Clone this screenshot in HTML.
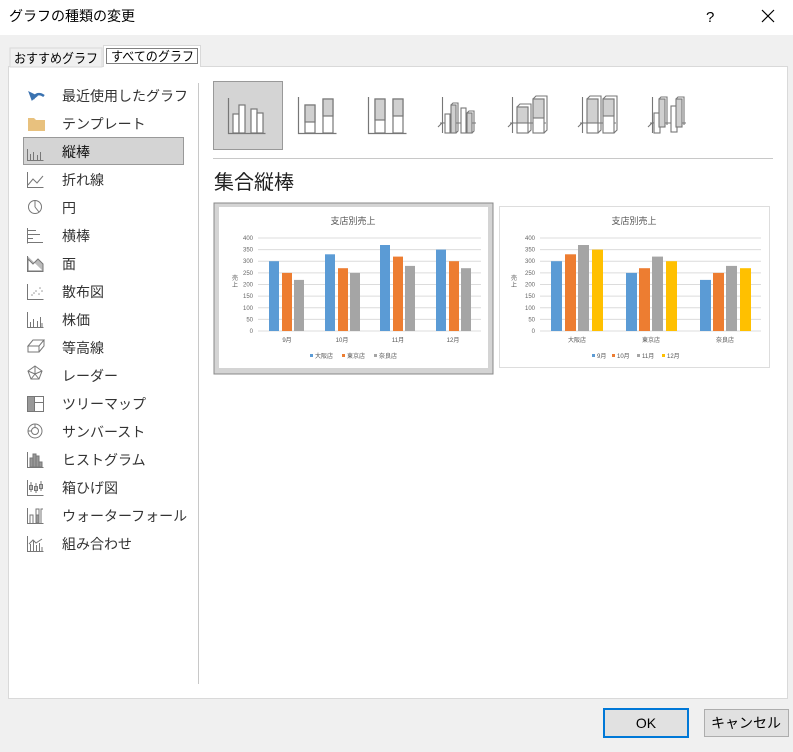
<!DOCTYPE html>
<html><head><meta charset="utf-8"><style>
body{margin:0;width:793px;height:747px;overflow:hidden;background:#f0f0f0;font-family:"Liberation Sans","Noto Sans CJK JP",sans-serif}
svg text{font-family:"Liberation Sans","Noto Sans CJK JP",sans-serif}
</style></head><body>
<svg width="793" height="747" xmlns="http://www.w3.org/2000/svg">
<rect x="0" y="0" width="793" height="35" fill="#fff"/>
<text x="9" y="21" font-size="14" fill="#000">グラフの種類の変更</text>
<text x="706" y="22" font-size="15" fill="#000">?</text>
<path d="M762 10 L774 22 M774 10 L762 22" stroke="#000" stroke-width="1.2"/>
<rect x="8.5" y="66.5" width="779" height="632" fill="#fff" stroke="#d9d9d9"/>
<rect x="10" y="48" width="92" height="19" fill="#f0f0f0" stroke="#d9d9d9"/>
<text x="14" y="63" font-size="13" textLength="84" lengthAdjust="spacingAndGlyphs">おすすめグラフ</text>
<rect x="103.5" y="45.5" width="97" height="21" fill="#fff" stroke="#d9d9d9"/>
<rect x="106.5" y="48.5" width="91" height="15" fill="none" stroke="#000" stroke-dasharray="1,1"/>
<text x="111" y="61" font-size="13" textLength="83" lengthAdjust="spacingAndGlyphs">すべてのグラフ</text>
<rect x="104" y="66" width="96" height="2" fill="#fff"/>
<line x1="198.5" y1="83" x2="198.5" y2="684" stroke="#c8c8c8"/>
<rect x="23.5" y="137.5" width="160" height="27" fill="#d4d4d4" stroke="#999"/>
<g font-size="14" fill="#333">
<text x="62" y="101">最近使用したグラフ</text>
<text x="62" y="129">テンプレート</text>
<text x="62" y="157" fill="#111">縦棒</text>
<text x="62" y="185">折れ線</text>
<text x="62" y="213">円</text>
<text x="62" y="241">横棒</text>
<text x="62" y="269">面</text>
<text x="62" y="297">散布図</text>
<text x="62" y="325">株価</text>
<text x="62" y="353">等高線</text>
<text x="62" y="381">レーダー</text>
<text x="62" y="409">ツリーマップ</text>
<text x="62" y="437">サンバースト</text>
<text x="62" y="465">ヒストグラム</text>
<text x="62" y="493">箱ひげ図</text>
<text x="62" y="521">ウォーターフォール</text>
<text x="62" y="549">組み合わせ</text>
</g>
<g fill="none" stroke="#777" stroke-width="1">
<path d="M33 99 Q37 91 44 96" stroke="#3a72b0" stroke-width="2.5"/><path d="M29 92 L32 100 L37 96Z" fill="#3a72b0" stroke="#3a72b0"/>
<path d="M28 118 h6 l2 2 h9 v11 h-17z" fill="#e8c17e" stroke="none"/>
<path d="M27.5 149 v11.5 h16 M30.5 160 v-6 M33.5 160 v-8 M37.5 160 v-5 M40.5 160 v-8"/>
<path d="M27.5 172 v15.5 h16 M28 185 l5 -6 l4 4 l6 -7"/>
<circle cx="35" cy="207" r="6.5"/><path d="M35 207 V200.5 M35 207 L39 212"/>
<path d="M27.5 228 v15.5 M28 230.5h8 M28 234.5h12 M28 238.5h5 M28 242.5h15"/>
<path d="M27.5 256 v15.5 h16 M28 259 l5 5 l5 -5 l5 5 v7 h-15z" fill="#bbb"/>
<path d="M27.5 284 v15.5 h16" /><g fill="#999" stroke="none"><circle cx="32" cy="295" r=".8"/><circle cx="36" cy="291" r=".8"/><circle cx="40" cy="288" r=".8"/><circle cx="34" cy="293" r=".8"/><circle cx="39" cy="294" r=".8"/><circle cx="42" cy="291" r=".8"/></g>
<path d="M27.5 312 v15.5 h16 M30.5 327 v-5 M33.5 327 v-8 M37.5 327 v-6 M40.5 327 v-10 M42 327 v-4"/>
<path d="M28 346 l5 -6 h11 l-5 6z M28 346 v6 h11 v-6 M39 352 l5 -6 v-6"/>
<path d="M35 366 l7 5 l-3 8 h-8 l-3 -8z M35 366 v8 l7 -3 M35 374 l4 5 M35 374 l-4 5 M35 374 l-7 -3"/>
<rect x="27.5" y="396.5" width="16" height="15"/><rect x="28" y="397" width="6" height="14" fill="#999" stroke="none"/><path d="M34.5 397 v14 M34.5 402.5 h9"/>
<circle cx="35" cy="431" r="7"/><circle cx="35" cy="431" r="3.5"/><path d="M35 424 L35 427.5 M28 431 h3.5"/>
<path d="M27.5 452 v15.5 h16" /><rect x="30" y="458" width="3" height="9" fill="#999"/><rect x="33" y="454" width="3" height="13" fill="#999"/><rect x="36" y="456" width="3" height="11" fill="#999"/><rect x="39" y="462" width="3" height="5" fill="#999"/>
<path d="M27.5 480 v15.5 h16 M31 482 v10 M36 483 v10 M41 481 v10"/><rect x="29.5" y="485.5" width="3" height="4"/><rect x="34.5" y="486.5" width="3" height="4"/><rect x="39.5" y="484.5" width="3" height="4"/>
<path d="M27.5 508 v15.5 h16 M30 523 v-8 h3 v8 M36 515 v-6 h3 v14 M41 523 v-14 h2"/><rect x="36" y="515" width="3" height="8" fill="#999"/>
<path d="M27.5 536 v15.5 h16 M30.5 551 v-7 M33.5 551 v-10 M36.5 551 v-6 M39.5 551 v-8 M42 551 v-4 M29 544 l4 -4 l3 3 l6 -4"/>
</g>
<rect x="213.5" y="81.5" width="69" height="68" fill="#d4d4d4" stroke="#999"/>
<g fill="none" stroke="#777" stroke-width="1.2">
<path d="M228.5 98 v35.5 h37"/>
<rect x="233" y="114" width="6" height="19" fill="#fff"/><rect x="239" y="105" width="6" height="28" fill="#fff"/><rect x="251" y="109" width="6" height="24" fill="#fff"/><rect x="257" y="113" width="6" height="20" fill="#fff"/>
<path d="M298.5 97 v36.5 h38"/>
<rect x="305" y="105" width="10" height="28" fill="#fff"/><rect x="305" y="105" width="10" height="17" fill="#d0d0d0"/>
<rect x="323" y="99" width="10" height="34" fill="#fff"/><rect x="323" y="99" width="10" height="17" fill="#d0d0d0"/>
<path d="M368.5 97 v36.5 h38"/>
<rect x="375" y="99" width="10" height="34" fill="#fff"/><rect x="375" y="99" width="10" height="21" fill="#d0d0d0"/>
<rect x="393" y="99" width="10" height="34" fill="#fff"/><rect x="393" y="99" width="10" height="17" fill="#d0d0d0"/>
</g>
<g fill="none" stroke="#777" stroke-width="1.1">
<path d="M442.5 97 v36 M438 127 l5 -5 M440 123 h36"/>
<rect x="445" y="114" width="5" height="19" fill="#fff"/><rect x="451" y="105" width="5" height="28" fill="#d0d0d0"/><rect x="461" y="108" width="5" height="25" fill="#fff"/><rect x="467" y="113" width="5" height="20" fill="#d0d0d0"/>
<path d="M451 105 l2 -2 h5 v28 l-2 2 M467 113 l2 -2 h5 v20 l-2 2"/>
<path d="M512.5 97 v36 M508 127 l5 -5 M510 123 h36"/>
<rect x="517" y="107" width="11" height="26" fill="#fff"/><rect x="517" y="107" width="11" height="16" fill="#d0d0d0"/>
<rect x="533" y="99" width="11" height="34" fill="#fff"/><rect x="533" y="99" width="11" height="19" fill="#d0d0d0"/>
<path d="M517 107 l3 -3 h11 v26 l-3 3 M533 99 l3 -3 h11 v34 l-3 3"/>
<path d="M582.5 97 v36 M578 127 l5 -5 M580 123 h36"/>
<rect x="587" y="99" width="11" height="34" fill="#fff"/><rect x="587" y="99" width="11" height="24" fill="#d0d0d0"/>
<rect x="603" y="99" width="11" height="34" fill="#fff"/><rect x="603" y="99" width="11" height="17" fill="#d0d0d0"/>
<path d="M587 99 l3 -3 h11 v34 l-3 3 M603 99 l3 -3 h11 v34 l-3 3"/>
<path d="M652.5 97 v36 M648 127 l5 -5 M650 123 h36"/>
<rect x="654" y="113" width="6" height="20" fill="#fff"/><rect x="659" y="99" width="6" height="28" fill="#d0d0d0"/><rect x="671" y="106" width="6" height="26" fill="#fff"/><rect x="676" y="99" width="6" height="28" fill="#d0d0d0"/>
<path d="M659 99 l2 -2 h6 v28 M676 99 l2 -2 h6 v28"/>
</g>
<line x1="213" y1="158.5" x2="773" y2="158.5" stroke="#c8c8c8"/>
<text x="214" y="189" font-size="20" fill="#222">集合縦棒</text>
<rect x="214" y="203" width="279" height="171" fill="#d4d4d4" stroke="#888"/>
<rect x="219" y="207" width="269" height="161" fill="#fff"/>
<g stroke="#dcdcdc" stroke-width="1">
<path d="M258 331h223M258 319.4h223M258 307.8h223M258 296.1h223M258 284.5h223M258 272.9h223M258 261.2h223M258 249.6h223M258 238h223"/>
</g>
<g font-size="6" fill="#666" text-anchor="end">
<text x="253" y="333">0</text><text x="253" y="321.5">50</text><text x="253" y="310">100</text><text x="253" y="298">150</text><text x="253" y="286.5">200</text><text x="253" y="275">250</text><text x="253" y="263">300</text><text x="253" y="251.5">350</text><text x="253" y="240">400</text>
</g>
<text x="353" y="224" font-size="9" fill="#555" text-anchor="middle">支店別売上</text>
<text x="232" y="280" font-size="6" fill="#555">売</text><text x="232" y="287" font-size="6" fill="#555">上</text>
<g fill="#5b9bd5"><rect x="269" y="261.2" width="10" height="69.8"/><rect x="325" y="254.3" width="10" height="76.7"/><rect x="380" y="245" width="10" height="86"/><rect x="436" y="249.6" width="10" height="81.4"/></g>
<g fill="#ed7d31"><rect x="282" y="272.9" width="10" height="58.1"/><rect x="338" y="268.2" width="10" height="62.8"/><rect x="393" y="256.6" width="10" height="74.4"/><rect x="449" y="261.2" width="10" height="69.8"/></g>
<g fill="#a5a5a5"><rect x="294" y="279.9" width="10" height="51.1"/><rect x="350" y="272.9" width="10" height="58.1"/><rect x="405" y="265.9" width="10" height="65.1"/><rect x="461" y="268.2" width="10" height="62.8"/></g>
<g font-size="6" fill="#555" text-anchor="middle"><text x="287" y="342">9月</text><text x="342" y="342">10月</text><text x="398" y="342">11月</text><text x="453" y="342">12月</text></g>
<g font-size="6" fill="#555"><rect x="310" y="354" width="3" height="3" fill="#5b9bd5"/><text x="315" y="358">大阪店</text><rect x="342" y="354" width="3" height="3" fill="#ed7d31"/><text x="347" y="358">東京店</text><rect x="374" y="354" width="3" height="3" fill="#a5a5a5"/><text x="379" y="358">奈良店</text></g>
<rect x="499.5" y="206.5" width="270" height="161" fill="#fff" stroke="#ddd"/>
<g stroke="#dcdcdc"><path d="M540 331h221M540 319.4h221M540 307.8h221M540 296.1h221M540 284.5h221M540 272.9h221M540 261.2h221M540 249.6h221M540 238h221"/></g>
<g font-size="6" fill="#666" text-anchor="end">
<text x="535" y="333">0</text><text x="535" y="321.5">50</text><text x="535" y="310">100</text><text x="535" y="298">150</text><text x="535" y="286.5">200</text><text x="535" y="275">250</text><text x="535" y="263">300</text><text x="535" y="251.5">350</text><text x="535" y="240">400</text>
</g>
<text x="634" y="224" font-size="9" fill="#555" text-anchor="middle">支店別売上</text>
<text x="511" y="280" font-size="6" fill="#555">売</text><text x="511" y="287" font-size="6" fill="#555">上</text>
<g fill="#5b9bd5"><rect x="551" y="261.2" width="11" height="69.8"/><rect x="626" y="272.9" width="11" height="58.1"/><rect x="700" y="279.9" width="11" height="51.1"/></g>
<g fill="#ed7d31"><rect x="565" y="254.3" width="11" height="76.7"/><rect x="639" y="268.2" width="11" height="62.8"/><rect x="713" y="272.9" width="11" height="58.1"/></g>
<g fill="#a5a5a5"><rect x="578" y="245" width="11" height="86"/><rect x="652" y="256.6" width="11" height="74.4"/><rect x="726" y="265.9" width="11" height="65.1"/></g>
<g fill="#ffc000"><rect x="592" y="249.6" width="11" height="81.4"/><rect x="666" y="261.2" width="11" height="69.8"/><rect x="740" y="268.2" width="11" height="62.8"/></g>
<g font-size="6" fill="#555" text-anchor="middle"><text x="577" y="342">大阪店</text><text x="651" y="342">東京店</text><text x="725" y="342">奈良店</text></g>
<g font-size="6" fill="#555"><rect x="592" y="354" width="3" height="3" fill="#5b9bd5"/><text x="597" y="358">9月</text><rect x="612" y="354" width="3" height="3" fill="#ed7d31"/><text x="617" y="358">10月</text><rect x="637" y="354" width="3" height="3" fill="#a5a5a5"/><text x="642" y="358">11月</text><rect x="662" y="354" width="3" height="3" fill="#ffc000"/><text x="667" y="358">12月</text></g>
<rect x="604" y="709" width="84" height="28" fill="#e1e1e1" stroke="#0078d7" stroke-width="2"/>
<text x="646" y="728" font-size="14" text-anchor="middle">OK</text>
<rect x="704.5" y="709.5" width="84" height="27" fill="#e1e1e1" stroke="#adadad"/>
<text x="746" y="728" font-size="14" text-anchor="middle">キャンセル</text>
</svg>
</body></html>
